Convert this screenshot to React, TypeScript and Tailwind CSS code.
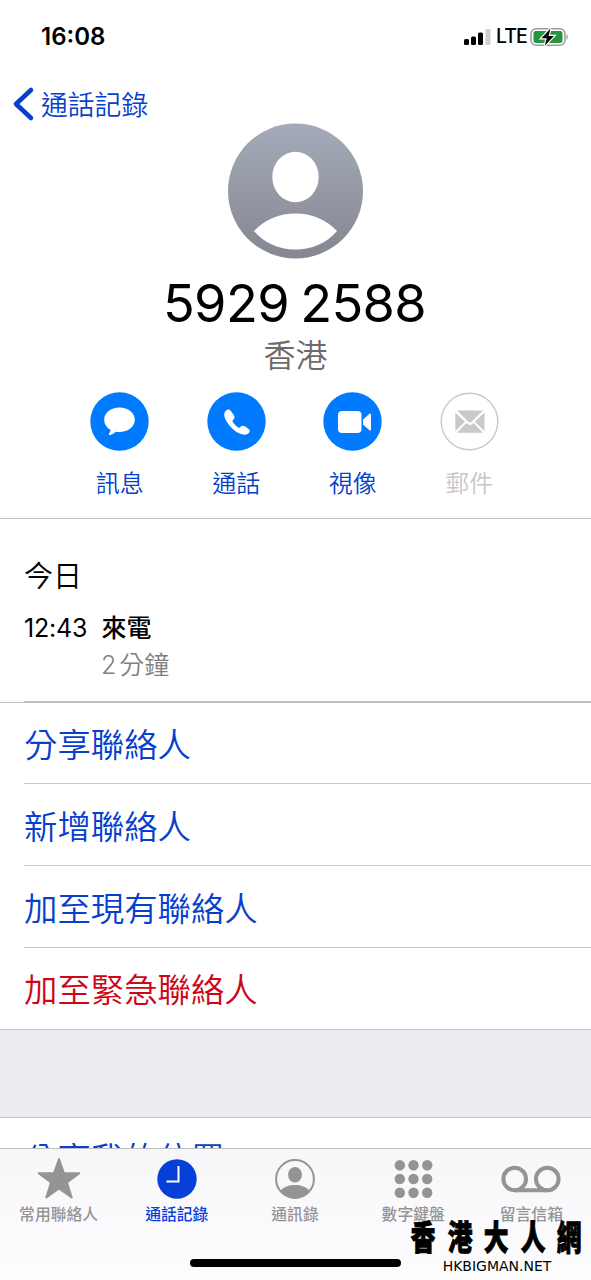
import type { ReactNode } from "react";

function StatusBar() {
  return (
    <div className="flex h-[72px] items-center justify-between pt-px pr-[22px] pl-[41px]">
      <span className="text-[24px] leading-none font-semibold">16:08</span>
      <div className="flex items-center">
        <svg width="27" height="18" viewBox="0 0 27 18">
          <rect x="0" y="11" width="5" height="6" rx="1.5" />
          <rect x="7" y="8.5" width="5" height="8.5" rx="1.5" />
          <rect x="14" y="4.5" width="5" height="12.5" rx="1.5" />
          <rect x="21.500" y="1" width="5" height="16" rx="1.500" fill="#cfcfcf" />
        </svg>
        <span className="mt-px ml-[5px] w-[29px] text-[19.5px] leading-none font-medium tracking-[-1px]">LTE</span>
        <svg className="ml-[5px]" width="39" height="20" viewBox="0 0 39 20">
          <rect x="1" y="1.700" width="34" height="16.600" rx="5" fill="#fff" stroke="#9c9c9c" strokeWidth="1.500" />
          <rect x="3.500" y="4" width="29" height="12" rx="2.500" fill="#27943f" />
          <path d="M36.500 7.200c1.800.5 1.800 5.100 0 5.600z" fill="#9c9c9c" />
          <path d="M20.500 1.500 11.500 11.200h5.200l-2 7.500 9.200-9.800h-5.300z" stroke="#fff" strokeWidth="2.400" paintOrder="stroke" />
        </svg>
      </div>
    </div>
  );
}

function Avatar() {
  return (
    <svg width="135" height="136" viewBox="0.500 0 135 136">
      <defs>
        <linearGradient id="avatar" x1="0" y1="0" x2="0" y2="1">
          <stop offset="0" stopColor="#a5abb9" />
          <stop offset="1" stopColor="#858792" />
        </linearGradient>
      </defs>
      <circle cx="68" cy="68" r="67.500" fill="url(#avatar)" />
      <ellipse cx="68" cy="54" rx="23.200" ry="25.300" fill="#fff" />
      <path d="M26.500 108C37 96.500 52 90.500 68 90.500s31 6 41.500 17.500C100 119.500 85 126.500 68 126.500S36 119.500 26.500 108z" fill="#fff" />
    </svg>
  );
}

function Action({ label, disabled, children }: { label: string; disabled?: boolean; children: ReactNode }) {
  return (
    <div className={disabled ? "flex w-[116.5px] flex-col items-center text-[#c7c7c9]" : "flex w-[116.5px] flex-col items-center text-[#0640cd]"}>
      <svg width="59" height="59" viewBox="0 0 59 59">
        {disabled ? (
          <circle cx="29.500" cy="29.500" r="28.300" fill="#fff" stroke="#c9c9cb" strokeWidth="1.400" />
        ) : (
          <circle cx="29.500" cy="29.500" r="29.200" fill="#007aff" />
        )}
        {children}
      </svg>
      <span className="mt-[15px] text-[24px] leading-[36px] font-[350]">{label}</span>
    </div>
  );
}

function Row({ label, danger, last }: { label: string; danger?: boolean; last?: boolean }) {
  return (
    <div className={last ? "h-[82px] border-b border-[#c4c4c7]" : "h-[82px] pl-6"}>
      <div
        className={
          (last ? "pl-6 pt-[4px] " : "border-b border-[#c8c8ca] pt-[6px] ") +
          (danger ? "text-[#cc0716] " : "text-[#0640cd] ") +
          "flex h-[82px] items-center text-[33.4px] leading-none font-[350]"
        }
      >
        {label}
      </div>
    </div>
  );
}

function Tab({ label, active, children }: { label: string; active?: boolean; children: ReactNode }) {
  return (
    <div className={active ? "flex flex-1 flex-col items-center text-[#0640d8]" : "flex flex-1 flex-col items-center text-[#949496]"}>
      <svg className="-ml-px" width="62" height="52" viewBox="0 0 62 52" fill="currentColor">
        {children}
      </svg>
      <span className="mt-[3px] -ml-px text-[15.8px] leading-5 font-medium">{label}</span>
    </div>
  );
}

export default function App() {
  return (
    <div className="relative h-[1280px] w-[591px] overflow-hidden bg-white font-['Inter','Noto_Sans_CJK_TC',sans-serif] text-black">
      <StatusBar />
      <div className="flex h-[51px] items-start pl-[12px] text-[#0640cd]">
        <svg className="mt-[14px]" width="23" height="36" viewBox="0 0 23 36" fill="none" stroke="currentColor" strokeWidth="4.6" strokeLinecap="round" strokeLinejoin="round">
          <path d="M19 4 4 18l15 14" />
        </svg>
        <span className="ml-[6px] pt-[13px] text-[26.8px] leading-[40px] font-[350]">通話記錄</span>
      </div>

      <div className="flex h-[269px] flex-col items-center">
        <Avatar />
        <div className="mt-[12px] -ml-[2px] text-[52.3px] leading-[64px] tracking-[-0.6px] whitespace-nowrap [word-spacing:-3px]">5929 2588</div>
        <div className="mt-[2px] text-[32px] leading-[38px] font-[350] text-[#6b6b6d]">香港</div>
      </div>

      <div className="flex h-[127px] justify-center border-b border-[#c4c4c7] pr-[2px]">
        <Action label="訊息">
          <path d="M29.500 15.500c8.600 0 15.300 5.300 15.300 12.200S38.100 40 29.500 40c-1.200 0-2.500-.1-3.600-.3-1.900 1.700-4.500 3.300-6.200 3.300-1 0-1.200-.9-.5-1.700.8-1 1.300-2.200 1.300-3.500-3.900-2.200-6.300-5.900-6.300-10.100 0-6.900 6.700-12.200 15.300-12.200z" fill="#fff" />
        </Action>
        <Action label="通話">
          <path d="M19 18.500c1.600-1.500 3.700-1.300 4.900.5l3 4.300c1 1.600.8 3-.4 4.200l-.6.7c-.6.700-.5 1.300-.1 1.900 1.400 2.200 3.200 3.900 5.400 5.300.7.400 1.300.4 1.900-.1l.8-.7c1.200-1.100 2.500-1.200 4-.3l3.500 2.400c1.700 1.200 1.800 2.900.4 4.200-2.200 2.200-5.800 2.300-9.600.4-6.100-3.100-11.200-8.600-13.900-14.400-1.500-3.300-1.600-6.300.700-8.400z" fill="#fff" />
        </Action>
        <Action label="視像">
          <rect x="15" y="19" width="23.500" height="22" rx="4" fill="#fff" />
          <path d="M40 27.500l6.500-5.700c.8-.7 1.500-.4 1.500.6v15.200c0 1-.7 1.300-1.500.6L40 32.500z" fill="#fff" />
        </Action>
        <Action label="郵件" disabled>
          <path d="M17 18.500h26L31.500 29.800c-1 .9-2.200.9-3.200 0zM15.300 20.500l9.700 9.200-9.700 9.500zM44.500 20.500v18.700L34.800 29.700zM26.300 31l.6.600c1.900 1.700 4.200 1.700 6 0l.6-.6L43 40.700H17z" fill="#c9c9cb" />
        </Action>
      </div>

      <div className="flex h-[184px] flex-col border-b border-[#c4c4c7]">
        <div className="mt-[38px] pl-6 text-[29px] leading-[40px] font-[350]">今日</div>
        <div className="mt-[12px] flex pl-6 text-[25px] leading-[38px]">
          <span className="w-[77.500px] tracking-[-0.2px]">12:43</span>
          <span className="font-medium">來電</span>
        </div>
        <div className="pl-[101px] text-[25px] leading-[36px] font-[350] text-[#7f7f81]">
          <span className="mr-[3px]">2</span>分鐘
        </div>
        <div className="mt-auto ml-6 h-px bg-[#bdbdc0]" />
      </div>

      <div className="flex flex-col">
        <div className="-mt-px"><Row label="分享聯絡人" /></div>
        <Row label="新增聯絡人" />
        <Row label="加至現有聯絡人" />
        <Row label="加至緊急聯絡人" danger last />
      </div>
      <div className="h-[88px] border-b border-[#c4c4c7] bg-[#ebebf0]" />
      <div className="flex h-[30px] items-start overflow-hidden pt-[17px] pl-6 text-[33.400px] leading-[48px] font-[350] whitespace-nowrap text-[#0640cd]">
        分享我的位置
      </div>

      <div className="relative h-[132px] border-t border-[#bfbfc2] bg-linear-to-b from-[#f7f7fa] to-[#fdfdfe]">
        <div className="flex pt-[1px]">
          <Tab label="常用聯絡人">
            <path d="m31 9 4.900 14.200h15.400L39 32.500 43.700 47.500 31 38.500 18.300 47.500 23 32.500 10.700 23.200h15.400z" stroke="currentColor" strokeWidth="2" strokeLinejoin="round" />
          </Tab>
          <Tab label="通話記錄" active>
            <circle cx="31" cy="29" r="19.700" />
            <path d="M32.500 16v15.500H20.500" fill="none" stroke="#fff" strokeWidth="2" />
          </Tab>
          <Tab label="通訊錄">
            <circle cx="31" cy="29" r="18.900" fill="none" stroke="currentColor" strokeWidth="2" />
            <ellipse cx="31" cy="24.800" rx="6.900" ry="7.700" />
            <path d="M16.500 41c3-4.200 8.500-6 14.500-6s11.500 1.800 14.500 6C42 45.300 36.500 48 31 48S20 45.300 16.500 41z" />
          </Tab>
          <Tab label="數字鍵盤">
            {[15.3, 29, 42.700].map((y) =>
              [17.800, 31.500, 45.200].map((x) => <circle key={`${x}-${y}`} cx={x} cy={y} r="5.200" />),
            )}
          </Tab>
          <Tab label="留言信箱">
            <g fill="none" stroke="currentColor" strokeWidth="4">
              <circle cx="14.700" cy="29" r="11.300" />
              <circle cx="47.300" cy="29" r="11.300" />
              <path d="M14.700 40.300h32.600" />
            </g>
          </Tab>
        </div>
        <div className="absolute top-[110px] left-[190px] h-2 w-[211px] rounded-full bg-black" />
        <div className="absolute top-[71px] left-[411px] flex w-[170px] flex-col items-center">
          <div className="flex h-[36px] w-full justify-between">
            {["香", "港", "大", "人", "網"].map((c) => (
              <span
                key={c}
                className="flex h-[36px] w-[24px] scale-x-[0.75] scale-y-[1.04] items-center justify-center text-[33px] leading-none font-black [-webkit-text-stroke:0.9px_black] [text-shadow:0_0_2px_white]"
              >
                {c}
              </span>
            ))}
          </div>
          <span className="mt-[1px] ml-[2px] font-['DejaVu_Sans',sans-serif] text-[14px] leading-[18px] whitespace-nowrap">HKBIGMAN.NET</span>
        </div>
      </div>
    </div>
  );
}
